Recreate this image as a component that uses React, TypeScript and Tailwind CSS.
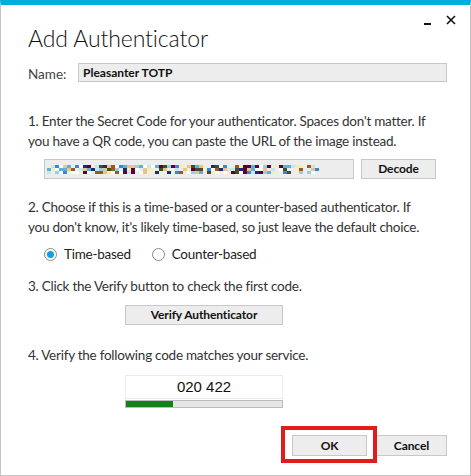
import React from 'react';

const palette = ['#3b86d0', '#8ed3ea', '#1c2a78', '#5a0032', '#e7c48a', '#f2eeb4', '#9a5a1e', '#c6e6ef', '#f4f1c8', '#3d5020', '#5cb0e0', '#ffffff', '#ffffff'];

// deterministic pseudo-random mosaic for the blurred secret
const mosaic = (() => {
    let seed = 23;
    const rnd = () => {
        seed = (seed * 9301 + 49297) % 233280;
        return seed / 233280;
    };
    const cells: { x: number; y: number; c: string }[] = [];
    for (let col = 0; col < 68; col++) {
        const skip = col > 60 ? 0.5 : 0.15;
        for (let row = 0; row < 3; row++) {
            if (rnd() < skip) continue;
            cells.push({ x: col * 4, y: row * 3, c: palette[Math.floor(rnd() * palette.length)] });
        }
    }
    return cells;
})();

const font = { fontFamily: 'Lato, "Open Sans", sans-serif' };

const Button: React.FC<{ label: string; className?: string }> = ({ label, className = '' }) => (
    <div className={`flex items-center justify-center bg-[#ededed] border border-[#c8c8c8] text-[12px] font-bold tracking-[-0.1px] text-[#111] ${className}`}>
        {label}
    </div>
);

const Radio: React.FC<{ checked?: boolean; label: string }> = ({ checked, label }) => (
    <div className="flex items-center gap-[7px]">
        <div className="w-[13px] h-[13px] rounded-full border border-[#8a8a8a] bg-white flex items-center justify-center">
            {checked && <div className="w-[7px] h-[7px] rounded-full bg-[#10a0e0]" />}
        </div>
        <span className="text-[13.5px] tracking-[-0.25px] text-[#222] leading-[16px]">{label}</span>
    </div>
);

const Para: React.FC<{ lines: string[]; className?: string }> = ({ lines, className = '' }) => (
    <div className={`text-[13.5px] tracking-[-0.25px] leading-[19.5px] text-[#333] ${className}`}>
        {lines.map(l => (
            <div key={l} className="whitespace-nowrap">{l}</div>
        ))}
    </div>
);

export default function App() {
    return (
        <div style={font} className="relative w-[471px] h-[476px] bg-white border-t-[5px] border-t-[#00aedb] border-x border-b border-x-[#c4c4c4] border-b-[#c4c4c4] overflow-hidden">
            <div className="absolute top-[9px] right-[14px] flex items-start gap-[15px] text-[#111]">
                <div className="w-[7px] h-[2px] bg-[#111] mt-[9px]" />
                <svg width="10" height="10" viewBox="0 0 10 10" className="mt-[1px]">
                    <path d="M1 1 L9 9 M9 1 L1 9" stroke="#111" strokeWidth="1.6" />
                </svg>
            </div>

            <div className="flex flex-col pl-[27px] pr-[23px]">
                <h1 className="mt-[17px] h-[32px] leading-[32px] text-[23px] tracking-[-0.1px] font-light text-[#111]">Add Authenticator</h1>

                <div className="mt-[9px] flex items-center h-[19px]">
                    <span className="w-[50px] text-[13.5px] text-[#444] pt-[4px]">Name:</span>
                    <div className="flex-1 h-[19px] bg-[#ededed] border border-[#c8c8c8] flex items-center pl-[4px] text-[12px] font-bold text-[#111]">
                        Pleasanter TOTP
                    </div>
                </div>

                <Para
                    className="mt-[30px]"
                    lines={[
                        "1. Enter the Secret Code for your authenticator. Spaces don't matter. If",
                        'you have a QR code, you can paste the URL of the image instead.',
                    ]}
                />

                <div className="mt-[8px] ml-[16px] flex items-center gap-[7px]">
                    <div className="w-[310px] h-[20px] bg-[#ededed] border border-[#c8c8c8] flex items-center pl-[2px]">
                        <svg width="272" height="9" viewBox="0 0 272 9">
                            {mosaic.map((m, i) => (
                                <rect key={i} x={m.x} y={m.y} width="4" height="3" fill={m.c} />
                            ))}
                        </svg>
                    </div>
                    <Button label="Decode" className="w-[75px] h-[20px]" />
                </div>

                <Para
                    className="mt-[19px]"
                    lines={[
                        '2. Choose if this is a time-based or a counter-based authenticator. If',
                        "you don't know, it's likely time-based, so just leave the default choice.",
                    ]}
                />

                <div className="mt-[9px] ml-[16px] flex items-center gap-[21px] h-[16px]">
                    <Radio checked label="Time-based" />
                    <Radio label="Counter-based" />
                </div>

                <Para className="mt-[15px]" lines={['3. Click the Verify button to check the first code.']} />

                <Button label="Verify Authenticator" className="mt-[8px] ml-[97px] w-[158px] h-[20px]" />

                <Para className="mt-[21px]" lines={['4. Verify the following code matches your service.']} />

                <div className="mt-[10px] ml-[97px] w-[158px] flex flex-col">
                    <div className="h-[24px] bg-white border border-[#ececec] flex items-center justify-center text-[15px] text-[#111]" style={{ fontFamily: '"Liberation Sans", Arial, sans-serif' }}>
                        020 422
                    </div>
                    <div className="mt-[1px] h-[8px] bg-[#e6e6e6] border border-[#bcbcbc]">
                        <div className="h-full bg-[#13801b]" style={{ width: '30%' }} />
                    </div>
                </div>

                <div className="mt-[27px] flex justify-end gap-[9px]">
                    <div className="relative">
                        <Button label="OK" className="w-[75px] h-[21px]" />
                        <div className="absolute -left-[11px] -top-[9px] -right-[10px] -bottom-[7px] border-[4px] border-[#e21b1b]" />
                    </div>
                    <Button label="Cancel" className="w-[71px] h-[21px]" />
                </div>
            </div>
        </div>
    );
}
